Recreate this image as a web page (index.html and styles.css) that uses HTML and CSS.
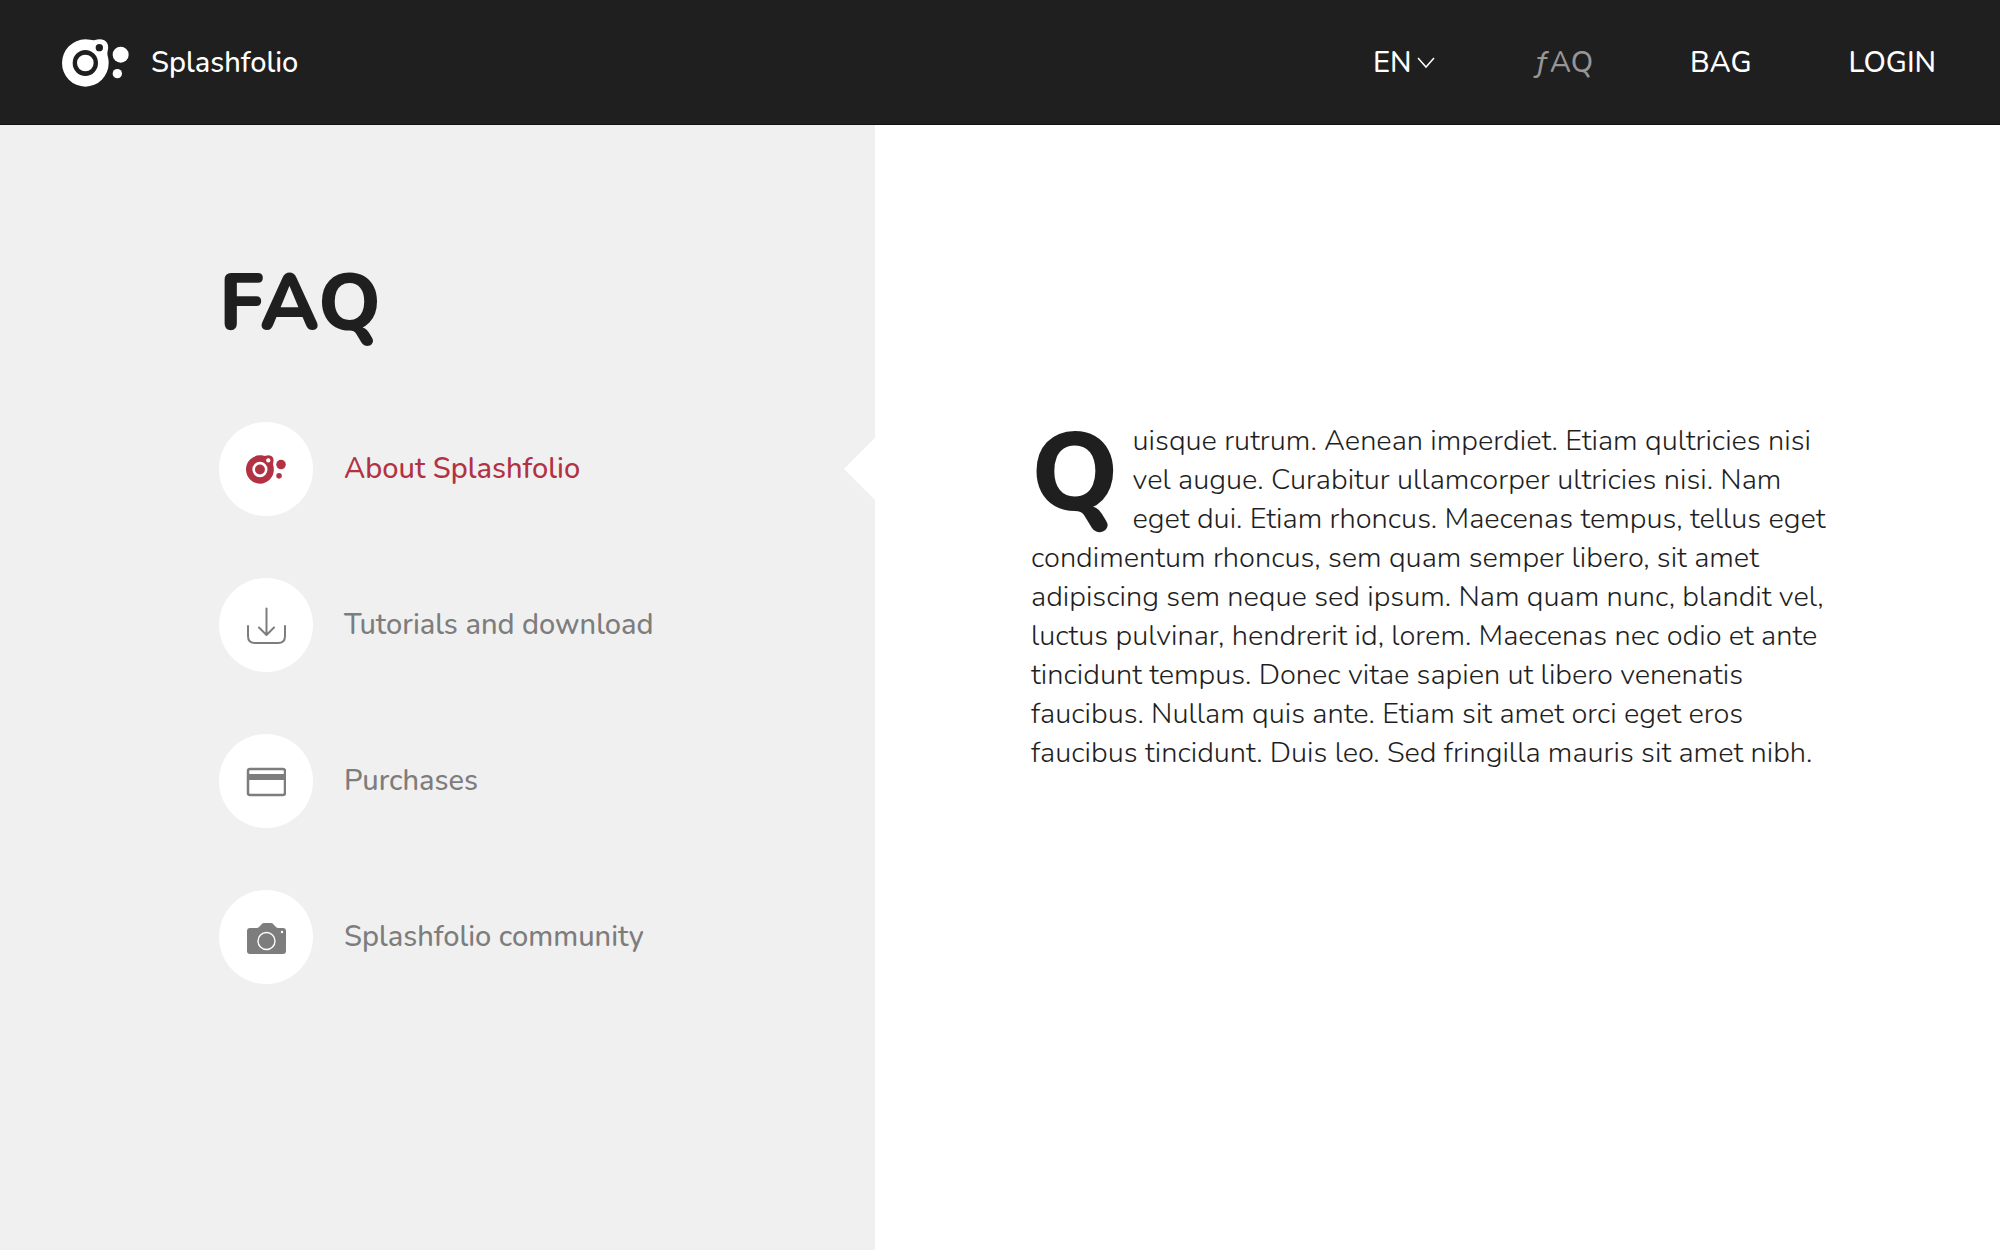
FILE: index.html
```html
<!DOCTYPE html>
<html lang="en">
<head>
<meta charset="utf-8">
<meta name="viewport" content="width=device-width, initial-scale=1">
<title>Splashfolio – FAQ</title>
<link rel="stylesheet" href="styles.css">
</head>
<body>
<svg class="symbols" aria-hidden="true">
  <symbol id="logo" viewBox="65 56 201 144">
    <path fill="currentColor" fill-rule="evenodd" d="M135 57C149 57 157 61 164 59C173 56 183 55 192 60C201 65 205 75 203 86C202 94 200 99 202 107C204 114 205 120 205 128A70 71 0 1 1 135 57ZM135 89A38 39 0 1 0 135 167A38 39 0 1 0 135 89ZM177 71A11 11 0 1 0 177 93A11 11 0 1 0 177 71Z"/>
    <circle cx="135" cy="128" r="25" fill="currentColor"/>
    <circle cx="241" cy="103" r="24" fill="currentColor"/>
    <circle cx="231" cy="160" r="14" fill="currentColor"/>
  </symbol>
</svg>
<header class="header">
  <a class="brand" href="#"><svg class="brand-logo" aria-hidden="true"><use href="#logo"/></svg>Splashfolio</a>
  <nav class="nav">
    <button class="lang" type="button">EN<svg class="chevron" viewBox="0 0 18 12" aria-hidden="true"><path d="M1 1l8 9 8-9"/></svg></button>
    <a class="current" href="#">ƒAQ</a>
    <a href="#">BAG</a>
    <a href="#">LOGIN</a>
  </nav>
</header>
<main class="main">
  <section class="sidebar">
    <h1 class="title">FAQ</h1>
    <ul class="topics">
      <li><a class="topic active" href="#"><span class="badge"><svg class="icon-logo" aria-hidden="true"><use href="#logo"/></svg></span>About Splashfolio</a></li>
      <li><a class="topic" href="#"><span class="badge"><svg class="icon" viewBox="0 0 40 40" aria-hidden="true"><path class="line" d="M20.500 3.500v26M13 22.500l7.500 7.500 7.500-7.500M2 21v10q0 7 7 7h23q7 0 7-7V21"/></svg></span>Tutorials and download</a></li>
      <li><a class="topic" href="#"><span class="badge"><svg class="icon" viewBox="0 0 40 40" aria-hidden="true"><rect class="line card" x="2" y="8" width="37" height="26" rx="2"/><path class="fill" d="M2 13h37v6H2z"/></svg></span>Purchases</a></li>
      <li><a class="topic" href="#"><span class="badge"><svg class="icon" viewBox="0 0 40 40" aria-hidden="true"><path class="fill" d="M4 11h7q1 0 2-1l2-2q1-2 3-2h7q2 0 3 2l2 2q1 1 2 1h5q3 0 3 3v20q0 3-3 3H4q-3 0-3-3V14q0-3 3-3z"/><circle class="lens" cx="20.500" cy="24" r="8.500"/><circle class="flash" cx="36" cy="15" r="1.200"/></svg></span>Splashfolio community</a></li>
    </ul>
  </section>
  <article class="answer">
    <p><span class="dropcap">Q</span>uisque rutrum. Aenean imperdiet. Etiam qultricies nisi<br>
    vel augue. Curabitur ullamcorper ultricies nisi. Nam<br>
    eget dui. Etiam rhoncus. Maecenas tempus, tellus eget<br>
    condimentum rhoncus, sem quam semper libero, sit amet<br>
    adipiscing sem neque sed ipsum. Nam quam nunc, blandit vel,<br>
    luctus pulvinar, hendrerit id, lorem. Maecenas nec odio et ante<br>
    tincidunt tempus. Donec vitae sapien ut libero venenatis<br>
    faucibus. Nullam quis ante. Etiam sit amet orci eget eros<br>
    faucibus tincidunt. Duis leo. Sed fringilla mauris sit amet nibh.</p>
  </article>
</main>
</body>
</html>
```

FILE: styles.css
```css
* { box-sizing: border-box; }

body {
  margin: 0;
  min-height: 100vh;
  display: flex;
  flex-direction: column;
  background: #fff;
  color: #1f1f1f;
  font: 500 29px/40px Nunito, Lato, "Open Sans", sans-serif;
}

a { color: inherit; text-decoration: none; }
.symbols { display: none; }

.header {
  display: flex;
  align-items: center;
  justify-content: space-between;
  padding: 43px 64px 41px 62px;
  background: #1f1f1f;
  border-bottom: 1px solid #111;
  color: #fff;
}

.brand { display: flex; align-items: center; gap: 22px; }
.brand-logo { width: 67px; height: 48px; margin: -4px 0; }
.nav { display: flex; align-items: center; gap: 97px; }
.nav .current { color: #969696; }

.lang {
  display: flex;
  align-items: center;
  gap: 6px;
  padding: 0;
  border: 0;
  background: none;
  color: inherit;
  font: inherit;
}
.chevron { width: 18px; height: 12px; fill: none; stroke: currentColor; stroke-width: 1.5; }

.main { flex: 1; display: grid; grid-template-columns: 7fr 9fr; }

.sidebar { padding: 138px 0 140px 219px; background: #f0f0f0; }
.title { margin: 0; font-size: 79px; line-height: 80px; font-weight: 800; }

.topics {
  display: grid;
  gap: 62px;
  margin: 0;
  padding: 79px 0 0;
  list-style: none;
}
.topic { position: relative; display: flex; align-items: center; gap: 31px; color: #7d7d7d; }
.active { color: #b23243; }
.active::after {
  content: "";
  position: absolute;
  right: 0;
  width: 31px;
  height: 62px;
  background: #fff;
  clip-path: polygon(100% 0, 100% 100%, 0 50%);
}

.badge {
  display: grid;
  place-items: center;
  width: 94px;
  height: 94px;
  border-radius: 50%;
  background: #fff;
}
.icon { width: 40px; height: 40px; }
.icon-logo { width: 40px; height: 29px; }
.line { fill: none; stroke: currentColor; stroke-width: 2; stroke-linecap: round; stroke-linejoin: round; }
.card { stroke-width: 2.5; }
.fill { fill: currentColor; }
.lens { fill: none; stroke: #fff; stroke-width: 1.4; }
.flash { fill: #fff; }

.answer { padding: 296px 120px 140px 156px; }
.answer p { margin: 0; font-weight: 300; line-height: 39px; white-space: nowrap; }
.dropcap {
  float: left;
  padding-right: 14px;
  font-size: 110px;
  line-height: 104px;
  font-weight: 800;
}
```
